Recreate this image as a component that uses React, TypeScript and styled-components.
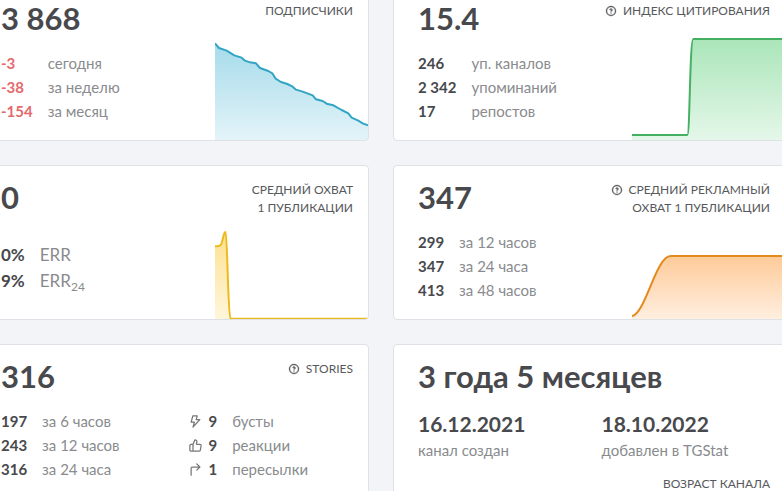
import React, { useId } from "react";
import styled, { createGlobalStyle } from "styled-components";

const GlobalStyle = createGlobalStyle`
  * { box-sizing: border-box; }
  body {
    margin: 0;
    overflow: hidden;
    background: #f2f4f8;
    color: #48494c;
    font-family: Lato, "Open Sans", sans-serif;
  }
`;

const Grid = styled.main`
  display: grid;
  grid-template-columns: 1fr 1fr;
  gap: 24px;
  margin: -14px -4px 0 -24px;
`;

const Card = styled.section`
  display: flex;
  flex-direction: column;
  min-height: 155px;
  border: 1px solid #dee1e5;
  border-radius: 4px;
  background: #fff;
  overflow: hidden;
`;

const Header = styled.header`
  display: flex;
  flex: 0 0 50px;
  min-height: 0;
  align-items: flex-start;
  justify-content: space-between;
  padding: 14px 15px 0 24px;
`;

const Value = styled.h2`
  margin: 0;
  font-size: 31px;
  line-height: 34px;
  font-weight: 700;
  white-space: nowrap;
`;

const Title = styled.h3`
  display: flex;
  gap: 6px;
  margin: 0;
  padding-top: 1px;
  color: #58595c;
  font-size: 12px;
  line-height: 18px;
  font-weight: 400;
  text-align: right;
  text-transform: uppercase;
  white-space: pre-line;
`;

const Footer = styled.footer`
  display: flex;
  justify-content: flex-end;
  margin-top: auto;
  padding: 0 15px 5px 0;
`;

const Body = styled.div`
  display: flex;
  justify-content: space-between;
  flex: 1;
`;

const Columns = styled.div`
  display: grid;
  grid-template-columns: 1fr 1fr;
  padding-left: 24px;
`;

const Stats = styled.table<{ $large?: boolean }>`
  align-self: flex-start;
  justify-self: start;
  margin-top: ${(p) => (p.$large ? 26 : 14)}px;
  border-collapse: collapse;
  font-size: ${(p) => (p.$large ? 17 : 15)}px;
  line-height: ${(p) => (p.$large ? 26 : 24)}px;
  white-space: nowrap;

  ${Body} > & { margin-left: 24px; }
  sub { font-size: 12px; line-height: 0; }
`;

const Amount = styled.td<{ $negative?: boolean }>`
  padding: 0 15px 0 0;
  font-weight: 700;
  color: ${(p) => (p.$negative ? "#e36a6e" : "inherit")};
`;

const Name = styled.th`
  padding: 0;
  color: #898b8e;
  font-weight: 400;
  text-align: left;
`;

const IconCell = styled.td`
  width: 24px;
  padding: 0 0 0 3px;
  color: #75777a;
  svg { display: block; }
`;

const DateBlock = styled.div`
  padding-top: 16px;
  white-space: nowrap;
`;

const DateValue = styled.div`
  font-size: 21px;
  line-height: 26px;
  font-weight: 700;
`;

const DateName = styled.div`
  color: #898b8e;
  font-size: 15px;
  line-height: 26px;
`;

const ChartSvg = styled.svg`
  flex: none;
  display: block;
  width: 153px;
  height: 103px;
`;

const HelpSvg = styled.svg`
  flex: none;
  margin-top: 3px;
`;

const HelpIcon = () => (
  <HelpSvg width="12" height="12" viewBox="0 0 24 24" fill="currentColor" aria-hidden="true">
    <path d="M11.29,15.29a1.58,1.58,0,0,0-.12.15.76.76,0,0,0-.09.18.64.64,0,0,0-.06.18,1.36,1.36,0,0,0,0,.2.84.84,0,0,0,.08.38.9.9,0,0,0,.54.54.94.94,0,0,0,.76,0,.9.9,0,0,0,.54-.54A1,1,0,0,0,13,16a1,1,0,0,0-.29-.71A1,1,0,0,0,11.29,15.29ZM12,2A10,10,0,1,0,22,12,10,10,0,0,0,12,2Zm0,18a8,8,0,1,1,8-8A8,8,0,0,1,12,20ZM12,7A3,3,0,0,0,9.4,8.5a1,1,0,1,0,1.73,1A1,1,0,0,1,12,9a1,1,0,0,1,0,2,1,1,0,1,0,0,2,3,3,0,0,0,0-6Z" stroke="currentColor" strokeWidth="0.6" />
  </HelpSvg>
);

const BoltIcon = () => (
  <svg width="15" height="15" viewBox="0 0 24 24" fill="currentColor" aria-hidden="true">
    <path d="M19.87,8.6A1,1,0,0,0,19,8H14.42l1.27-4.74a1,1,0,0,0-.17-.87A1,1,0,0,0,14.72,2h-7a1,1,0,0,0-1,.74L4.07,12.74a1,1,0,0,0,.17.87A1,1,0,0,0,5,14H8.89L7.08,20.74a1,1,0,0,0,1.69.95L19.7,9.69A1,1,0,0,0,19.87,8.6Zm-9.79,8.68,1.07-4a1,1,0,0,0-.17-.87,1,1,0,0,0-.79-.39H6.35L8.49,4h4.93L12.15,8.74a1,1,0,0,0,.17.87,1,1,0,0,0,.8.39h3.57Z" />
  </svg>
);

const ThumbIcon = () => (
  <svg width="15" height="15" viewBox="0 0 24 24" fill="currentColor" aria-hidden="true">
    <path d="M21.3,10.08A3,3,0,0,0,19,9H14.44L15,7.57A4.13,4.13,0,0,0,11.11,2a1,1,0,0,0-.91.59L7.35,9H5a3,3,0,0,0-3,3v7a3,3,0,0,0,3,3H17.73a3,3,0,0,0,2.95-2.46l1.27-7A3,3,0,0,0,21.3,10.08ZM7,20H5a1,1,0,0,1-1-1V12a1,1,0,0,1,1-1H7Zm13-7.82-1.27,7a1,1,0,0,1-1,.82H9V10.21l2.72-6.12A2.11,2.11,0,0,1,13.1,6.87L12.57,8.3A2,2,0,0,0,14.44,11H19a1,1,0,0,1,.77.36A1,1,0,0,1,20,12.18Z" />
  </svg>
);

const ForwardIcon = () => (
  <svg width="15" height="15" viewBox="0 0 24 24" fill="none" stroke="currentColor" strokeWidth="2" strokeLinecap="round" strokeLinejoin="round" aria-hidden="true">
    <path d="M5 21V10a2 2 0 0 1 2-2H19M14 3l5 5-5 5" />
  </svg>
);

type ChartProps = { line: string; stroke: string; fill: string; top: number; label: string };

// Sparkline: the open line is stroked, the same path closed to the base is filled.
const Chart = ({ line, stroke, fill, top, label }: ChartProps) => {
  const id = useId();
  return (
    <ChartSvg viewBox="0 0 459 309" preserveAspectRatio="none" role="img" aria-label={label}>
      <defs>
        <linearGradient id={id} gradientUnits="userSpaceOnUse" x1="0" y1={top} x2="0" y2="309">
          <stop offset="0" stopColor={fill} stopOpacity="0.45" />
          <stop offset="1" stopColor={fill} stopOpacity="0.14" />
        </linearGradient>
      </defs>
      <path d={`${line}V309H0Z`} fill={`url(#${id})`} />
      <path d={line} fill="none" stroke={stroke} strokeWidth="6" strokeLinejoin="round" />
    </ChartSvg>
  );
};

type Row = { amount: string; name: React.ReactNode; icon?: React.ReactNode };

const StatTable = ({ rows, large, negative }: { rows: Row[]; large?: boolean; negative?: boolean }) => (
  <Stats $large={large}>
    <tbody>
      {rows.map((row, i) => (
        <tr key={i}>
          {row.icon && <IconCell>{row.icon}</IconCell>}
          <Amount $negative={negative}>{row.amount}</Amount>
          <Name scope="row">{row.name}</Name>
        </tr>
      ))}
    </tbody>
  </Stats>
);

const CardTitle = ({ help, children }: { help?: boolean; children: string }) => (
  <Title>
    {help && <HelpIcon />}
    <span>{children}</span>
  </Title>
);

export default function App() {
  return (
    <>
      <GlobalStyle />
      <Grid>
        <Card>
          <Header>
            <Value>3 868</Value>
            <CardTitle>подписчики</CardTitle>
          </Header>
          <Body>
            <StatTable
              negative
              rows={[
                { amount: "-3", name: "сегодня" },
                { amount: "-38", name: "за неделю" },
                { amount: "-154", name: "за месяц" },
              ]}
            />
            <Chart
              label="Подписчики"
              stroke="#31a5c3"
              fill="#39afd1"
              top={20}
              line="M0 19L12 33L35 41L58 55L80 62L90 71L105 76L123 79L135 93L160 102L172 109L182 125L198 135L217 141L233 149L243 158L263 164L293 175L303 187L323 192L335 200L355 205L380 219L400 229L410 242L430 251L443 259L459 265"
            />
          </Body>
        </Card>

        <Card>
          <Header>
            <Value>15.4</Value>
            <CardTitle help>индекс цитирования</CardTitle>
          </Header>
          <Body>
            <StatTable
              rows={[
                { amount: "246", name: "уп. каналов" },
                { amount: "2 342", name: "упоминаний" },
                { amount: "17", name: "репостов" },
              ]}
            />
            <Chart
              label="Индекс цитирования"
              stroke="#45b062"
              fill="#42c663"
              top={5}
              line="M0 294H166C174 294 173 6 184 6H459"
            />
          </Body>
        </Card>

        <Card>
          <Header>
            <Value>0</Value>
            <CardTitle>{"средний охват\n1 публикации"}</CardTitle>
          </Header>
          <Body>
            <StatTable
              large
              rows={[
                { amount: "0%", name: "ERR" },
                { amount: "9%", name: <>ERR<sub>24</sub></> },
              ]}
            />
            <Chart
              label="Средний охват 1 публикации"
              stroke="#edba1b"
              fill="#fbbc06"
              top={48}
              line="M0 91C8 90 12 91 17 87C23 80 25 50 31 48C38 52 38 300 47 308H459"
            />
          </Body>
        </Card>

        <Card>
          <Header>
            <Value>347</Value>
            <CardTitle help>{"средний рекламный\nохват 1 публикации"}</CardTitle>
          </Header>
          <Body>
            <StatTable
              rows={[
                { amount: "299", name: "за 12 часов" },
                { amount: "347", name: "за 24 часа" },
                { amount: "413", name: "за 48 часов" },
              ]}
            />
            <Chart
              label="Средний рекламный охват 1 публикации"
              stroke="#e38a1f"
              fill="#fd8a1c"
              top={120}
              line="M0 300C40 294 72 120 116 120H459"
            />
          </Body>
        </Card>

        <Card>
          <Header>
            <Value>316</Value>
            <CardTitle help>stories</CardTitle>
          </Header>
          <Columns>
            <StatTable
              rows={[
                { amount: "197", name: "за 6 часов" },
                { amount: "243", name: "за 12 часов" },
                { amount: "316", name: "за 24 часа" },
              ]}
            />
            <StatTable
              rows={[
                { icon: <BoltIcon />, amount: "9", name: "бусты" },
                { icon: <ThumbIcon />, amount: "9", name: "реакции" },
                { icon: <ForwardIcon />, amount: "1", name: "пересылки" },
              ]}
            />
          </Columns>
        </Card>

        <Card>
          <Header>
            <Value>3 года 5 месяцев</Value>
          </Header>
          <Columns>
            <DateBlock>
              <DateValue>16.12.2021</DateValue>
              <DateName>канал создан</DateName>
            </DateBlock>
            <DateBlock>
              <DateValue>18.10.2022</DateValue>
              <DateName>добавлен в TGStat</DateName>
            </DateBlock>
          </Columns>
          <Footer>
            <CardTitle>возраст канала</CardTitle>
          </Footer>
        </Card>
      </Grid>
    </>
  );
}
